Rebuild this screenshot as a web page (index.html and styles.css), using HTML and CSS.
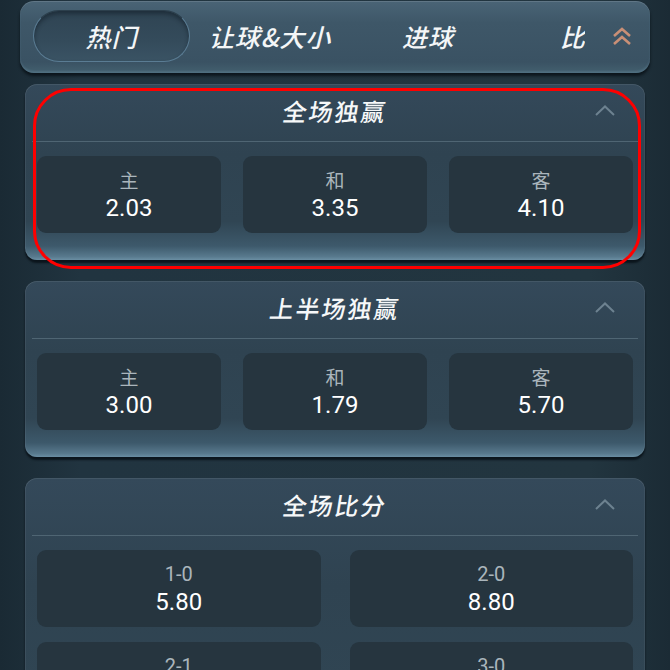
FILE: index.html
```html
<!DOCTYPE html>
<html lang="zh">
<head>
<meta charset="utf-8">
<link rel="stylesheet" href="styles.css">
</head>
<body>
<div class="page">
  <div class="tabbar">
    <div class="tabs">
      <div class="tab active">热门</div>
      <div class="tab">让球&amp;大小</div>
      <div class="tab">进球</div>
      <div class="tab">比分</div>
    </div>
    <div class="expand">
      <svg width="20" height="19" viewBox="0 0 20 19"><polyline points="2,9 10,2 18,9" fill="none" stroke="#c98f76" stroke-width="2.6" stroke-linejoin="miter"/><polyline points="2,17 10,10 18,17" fill="none" stroke="#c98f76" stroke-width="2.6"/></svg>
    </div>
  </div>

  <div class="cards">
    <section class="card">
      <div class="card-head">
        <span></span>
        <h2 class="title">全场独赢</h2>
        <svg class="caret" width="20" height="11" viewBox="0 0 20 11"><polyline points="1,10 10,1.5 19,10" fill="none" stroke="#6d8290" stroke-width="2"/></svg>
      </div>
      <div class="grid three">
        <div class="cell"><span class="lab">主</span><span class="val">2.03</span></div>
        <div class="cell"><span class="lab">和</span><span class="val">3.35</span></div>
        <div class="cell"><span class="lab">客</span><span class="val">4.10</span></div>
      </div>
      <div class="mark"></div>
    </section>

    <section class="card">
      <div class="card-head">
        <span></span>
        <h2 class="title">上半场独赢</h2>
        <svg class="caret" width="20" height="11" viewBox="0 0 20 11"><polyline points="1,10 10,1.5 19,10" fill="none" stroke="#6d8290" stroke-width="2"/></svg>
      </div>
      <div class="grid three">
        <div class="cell"><span class="lab">主</span><span class="val">3.00</span></div>
        <div class="cell"><span class="lab">和</span><span class="val">1.79</span></div>
        <div class="cell"><span class="lab">客</span><span class="val">5.70</span></div>
      </div>
    </section>

    <section class="card">
      <div class="card-head">
        <span></span>
        <h2 class="title">全场比分</h2>
        <svg class="caret" width="20" height="11" viewBox="0 0 20 11"><polyline points="1,10 10,1.5 19,10" fill="none" stroke="#6d8290" stroke-width="2"/></svg>
      </div>
      <div class="grid two">
        <div class="cell"><span class="lab num">1-0</span><span class="val">5.80</span></div>
        <div class="cell"><span class="lab num">2-0</span><span class="val">8.80</span></div>
        <div class="cell"><span class="lab num">2-1</span><span class="val">9.00</span></div>
        <div class="cell"><span class="lab num">3-0</span><span class="val">19.00</span></div>
      </div>
    </section>
  </div>
</div>
</body>
</html>
```

FILE: styles.css
```css
html, body {
  margin: 0;
  padding: 0;
  height: 100%;
  overflow: hidden;
}
body {
  background: linear-gradient(90deg, #1a2a34 0%, #213440 12%, #22353f 88%, #1b2b35 100%);
  font-family: "Noto Sans CJK SC", "Noto Sans", sans-serif;
  color: #fff;
}
.page {
  padding: 1px 20px 0;
}
.tabbar {
  height: 72px;
  box-sizing: border-box;
  display: flex;
  align-items: flex-start;
  padding: 9px 0 0 13px;
  border-radius: 14px;
  background: linear-gradient(180deg, #4a6476 0%, #3e5768 30%, #3a5263 85%, #43606f 100%);
  box-shadow: 0 3px 3px rgba(5, 12, 18, 0.75), inset 0 1px 0 rgba(255,255,255,0.12), inset 0 -2px 2px rgba(120,160,185,0.25);
}
.tabs {
  flex: 0 0 552px;
  display: flex;
  overflow: hidden;
}
.tab {
  flex: 0 0 158px;
  height: 52px;
  box-sizing: border-box;
  display: flex;
  align-items: center;
  justify-content: center;
  font-size: 25px;
  font-style: italic;
  font-weight: 500;
  letter-spacing: 1px;
  color: #f4f6f7;
}
.tab.active {
  flex-basis: 157px;
  margin-right: 1px;
  border-radius: 26px;
  border: 1.5px solid #5a7c93;
  border-top-color: #2c3f4c;
  background: linear-gradient(180deg, #2f4453 0%, #344b5b 60%, #3a5364 100%);
  box-shadow: inset 0 3px 4px rgba(10, 20, 28, 0.45);
}
.expand {
  flex: 1;
  height: 52px;
  display: flex;
  align-items: center;
  justify-content: center;
  padding-left: 8px;
}
.cards {
  padding: 11px 5px 0;
  display: flex;
  flex-direction: column;
  gap: 21px;
}
.card {
  position: relative;
  border-radius: 12px;
  padding-bottom: 27px;
  background: linear-gradient(180deg, #34495a 0%, #2f4351 40%, #304553 78%, #3d596b 92%, #58798d 98%, #6a8ea3 100%);
  box-shadow: 0 3px 2px rgba(6, 14, 20, 0.8), inset 1px 0 0 rgba(255,255,255,0.06), inset -1px 0 0 rgba(255,255,255,0.05), inset 0 1px 0 rgba(255,255,255,0.08);
}
.card-head {
  height: 58px;
  box-sizing: border-box;
  padding-bottom: 3px;
  display: grid;
  grid-template-columns: 1fr auto 1fr;
  align-items: center;
  border-bottom: 1px solid #4f6573;
  margin: 0 7px;
  padding-left: 23px;
  padding-right: 23px;
}
.title {
  margin: 0;
  font-size: 24px;
  font-weight: 500;
  font-style: normal;
  display: inline-block;
  transform: skewX(-9deg);
  letter-spacing: 2px;
  color: #f6f8f9;
  line-height: 1;
}
.caret {
  justify-self: end;
  margin-top: -2px;
}
.grid {
  display: grid;
  padding: 14px 12px 0;
}
.grid.three {
  grid-template-columns: repeat(3, 1fr);
  column-gap: 22px;
}
.grid.two {
  grid-template-columns: repeat(2, 1fr);
  column-gap: 29px;
  row-gap: 15px;
}
.cell {
  height: 77px;
  border-radius: 9px;
  background: #26353f;
  display: flex;
  flex-direction: column;
  align-items: center;
  justify-content: center;
}
.lab {
  font-size: 19px;
  line-height: 24px;
  color: #aab5bc;
}
.lab.num {
  font-family: Roboto, "Noto Sans", sans-serif;
  font-size: 20px;
}
.val {
  font-family: Roboto, "Noto Sans", sans-serif;
  font-size: 24px;
  line-height: 28px;
  color: #ffffff;
  margin-top: 2px;
}
.mark {
  position: absolute;
  left: 8px;
  top: 4px;
  right: 4px;
  bottom: -9px;
  border: 3.5px solid #ff0000;
  border-radius: 38px;
  pointer-events: none;
}
```
